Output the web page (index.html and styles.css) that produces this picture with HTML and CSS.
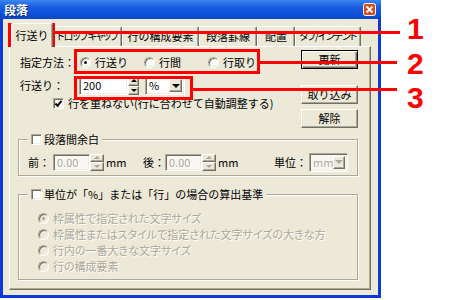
FILE: index.html
```html
<!DOCTYPE html>
<html lang="ja">
<head>
  <meta charset="UTF-8">
  <title>段落</title>
  <link rel="stylesheet" href="styles.css">
</head>
<body>

<div class="stage">
  <div class="window">
    <div class="titlebar">
      <span class="title">段落</span>
      <span class="close-btn">
        <svg width="13" height="13" viewBox="0 0 13 13">
          <rect x="0.5" y="0.5" width="12" height="12" rx="2" fill="#DA4A22" stroke="#fff"/>
          <path d="M3.5 3.5 L9.5 9.5 M9.5 3.5 L3.5 9.5" stroke="#fff" stroke-width="1.8"/>
        </svg>
      </span>
    </div>

    <div class="window-body">
      <!-- Onglets -->
      <div class="tabs">
        <span class="tab active tab-spacing">行送り</span>
        <span class="tab tab-narrow tab-dropcap">ドロップキャップ</span>
        <span class="tab tab-parts">行の構成要素</span>
        <span class="tab tab-rule">段落罫線</span>
        <span class="tab tab-align">配置</span>
        <span class="tab tab-narrow tab-indent">タブ/インデント</span>
      </div>

      <div class="panel">
        <div class="top">
          <div class="fields">
            <div class="row row-method">
              <span class="field-label">指定方法：</span>
              <span class="option"><span class="radio checked"></span>行送り</span>
              <span class="option"><span class="radio"></span>行間</span>
              <span class="option"><span class="radio"></span>行取り</span>
            </div>
            <div class="row row-spacing">
              <span class="field-label">行送り：</span>
              <span class="spin">
                <span class="spin-input">200</span>
                <span class="spin-btns"><span class="up"></span><span class="down"></span></span>
              </span>
              <span class="combo">
                <span class="combo-text">%</span>
                <span class="combo-btn"></span>
              </span>
            </div>
            <div class="row row-check">
              <span class="check checked"></span>行を重ねない(行に合わせて自動調整する)
            </div>
          </div>

          <div class="buttons">
            <span class="btn default">更新</span>
            <span class="btn btn-import">取り込み</span>
            <span class="btn btn-reset">解除</span>
          </div>
        </div>

        <!-- Espacement entre paragraphes -->
        <fieldset class="group group-margin">
          <legend><span class="check"></span>段落間余白</legend>
          <div class="row margin-row">
            <span class="field-label before-label">前：</span>
            <span class="spin spin-sm disabled">
              <span class="spin-input">0.00</span>
              <span class="spin-btns"><span class="up"></span><span class="down"></span></span>
            </span>
            <span class="unit">mm</span>
            <span class="field-label after-label">後：</span>
            <span class="spin spin-sm disabled">
              <span class="spin-input">0.00</span>
              <span class="spin-btns"><span class="up"></span><span class="down"></span></span>
            </span>
            <span class="unit">mm</span>
            <span class="field-label unit-label">単位：</span>
            <span class="combo combo-sm disabled">
              <span class="combo-text">mm</span>
              <span class="combo-btn"></span>
            </span>
          </div>
        </fieldset>

        <!-- Base de calcul -->
        <fieldset class="group group-basis">
          <legend><span class="check"></span>単位が「%」または「行」の場合の算出基準</legend>
          <div class="choices">
            <div class="choice"><span class="radio checked"></span>枠属性で指定された文字サイズ</div>
            <div class="choice"><span class="radio"></span>枠属性またはスタイルで指定された文字サイズの大きな方</div>
            <div class="choice"><span class="radio"></span>行内の一番大きな文字サイズ</div>
            <div class="choice"><span class="radio"></span>行の構成要素</div>
          </div>
        </fieldset>
      </div>
    </div>
  </div>

  <!-- Annotations rouges -->
  <div class="callouts">
    <span class="mark mark-tab"></span>
    <span class="mark mark-method"></span>
    <span class="mark mark-spacing"></span>
    <span class="lead lead-1"></span>
    <span class="lead lead-2"></span>
    <span class="lead lead-3"></span>
    <span class="num num-1">1</span>
    <span class="num num-2">2</span>
    <span class="num num-3">3</span>
  </div>
</div>

</body>
</html>
```

FILE: styles.css
```css
body {
  margin: 0;
  background-color: #fff;
  font-family: "Noto Sans CJK JP", "Noto Sans", sans-serif;
  font-size: 11px;
  color: #000;
}

.stage {
  position: relative;
  width: 450px;
  height: 300px;
  overflow: hidden;
}

.window {
  width: 381px;
  height: 298px;
  box-sizing: border-box;
  display: flex;
  flex-direction: column;
  background-color: #0C3AD8;
  padding: 0 3px 3px;
}

.titlebar {
  height: 19px;
  margin: 0 -3px;
  padding: 0 5px 0 4px;
  display: flex;
  align-items: center;
  justify-content: space-between;
  background: linear-gradient(#3B86F2, #1A5FE0 35%, #0B50D8 75%, #0A47C6);
}

.title {
  color: #fff;
  font-weight: bold;
  font-size: 12px;
  line-height: 19px;
  text-shadow: 1px 1px 0 #0A2A8A;
}

.close-btn {
  display: flex;
  width: 13px;
  height: 13px;
}

.window-body {
  flex: 1;
  display: flex;
  flex-direction: column;
  background-color: #ECE9D8;
  padding: 4px 7px 5px 6px;
  line-height: 13px;
}

/* Onglets */
.tabs {
  display: flex;
  align-items: flex-end;
  height: 23px;
  margin-left: 2px;
}

.tab {
  box-sizing: border-box;
  height: 20px;
  border: 1px solid #fff;
  border-right-color: #716F64;
  border-bottom: 0;
  border-radius: 2px 2px 0 0;
  box-shadow: inset -1px 0 0 #ACA899;
  text-align: center;
  line-height: 18px;
  white-space: nowrap;
  overflow: hidden;
}

.tab.active {
  height: 24px;
  margin-bottom: -1px;
  position: relative;
  z-index: 1;
  background-color: #ECE9D8;
  line-height: 22px;
}

.tab-narrow {
  font-size: 10px;
  letter-spacing: -1px;
  font-feature-settings: "palt";
}

.tab-spacing { width: 42px; }
.tab-dropcap { width: 69px; }
.tab-parts { width: 77px; }
.tab-rule { width: 58px; }
.tab-align { width: 38px; }
.tab-indent { width: 66px; }

.panel {
  flex: 1;
  box-sizing: border-box;
  border: 1px solid #fff;
  border-right-color: #716F64;
  border-bottom-color: #716F64;
  box-shadow: inset -1px -1px 0 #ACA899;
  padding: 3px 12px 0 8px;
}

/* Controles */
.radio,
.check,
.spin-input,
.combo {
  box-sizing: border-box;
  border: 1px solid;
  border-color: #ACA899 #fff #fff #ACA899;
  box-shadow: inset 1px 1px 0 #716F64, inset -1px -1px 0 #F1EFE2;
  background-color: #fff;
}

.btn,
.spin-btns span,
.combo-btn {
  box-sizing: border-box;
  border: 1px solid;
  border-color: #fff #716F64 #716F64 #fff;
  box-shadow: inset -1px -1px 0 #ACA899;
  background-color: #ECE9D8;
}

.radio {
  flex: none;
  width: 11px;
  height: 11px;
  border-radius: 50%;
  display: flex;
  align-items: center;
  justify-content: center;
}

.radio.checked::after {
  content: "";
  width: 3px;
  height: 3px;
  border-radius: 50%;
  background-color: #000;
}

.check {
  flex: none;
  width: 11px;
  height: 11px;
  display: flex;
  align-items: center;
  justify-content: center;
}

.check.checked::after {
  content: "";
  width: 5px;
  height: 2px;
  margin-top: -2px;
  border-left: 2px solid #000;
  border-bottom: 2px solid #000;
  transform: rotate(-50deg);
}

.top {
  display: flex;
  justify-content: space-between;
}

.fields {
  display: flex;
  flex-direction: column;
}

.row {
  display: flex;
  align-items: center;
}

.row-method {
  height: 24px;
}

.field-label {
  flex: none;
  margin-left: 2px;
}

.row-method .field-label {
  width: 60px;
}

.option {
  display: flex;
  align-items: center;
  gap: 4px;
  width: 64px;
}

.row-spacing {
  height: 23px;
}

.row-spacing .field-label {
  width: 59px;
}

.spin {
  display: flex;
  height: 19px;
}

.spin-input {
  width: 49px;
  padding-left: 3px;
  line-height: 17px;
}

.spin-btns {
  display: flex;
  flex-direction: column;
  width: 11px;
}

.spin-btns span {
  flex: 1;
  display: flex;
  align-items: center;
  justify-content: center;
}

.spin-btns .up::after {
  content: "";
  border-left: 3px solid transparent;
  border-right: 3px solid transparent;
  border-bottom: 3px solid #000;
}

.spin-btns .down::after {
  content: "";
  border-left: 3px solid transparent;
  border-right: 3px solid transparent;
  border-top: 3px solid #000;
}

.combo {
  margin-left: 6px;
  width: 40px;
  height: 19px;
  display: flex;
  padding: 2px;
}

.combo-text {
  flex: 1;
  padding-left: 1px;
  line-height: 13px;
}

.combo-btn {
  width: 13px;
  display: flex;
  align-items: center;
  justify-content: center;
}

.combo-btn::after {
  content: "";
  border-left: 4px solid transparent;
  border-right: 4px solid transparent;
  border-top: 4px solid #000;
}

.row-check {
  height: 13px;
  padding-left: 35px;
  gap: 4px;
}

.buttons {
  display: flex;
  flex-direction: column;
  width: 57px;
}

.btn {
  height: 19px;
  text-align: center;
  line-height: 17px;
}

.btn.default {
  border-color: #000;
  box-shadow: inset 1px 1px 0 #fff, inset -1px -1px 0 #716F64, inset -2px -2px 0 #ACA899;
}

.btn-import {
  margin-top: 16px;
}

.btn-reset {
  margin-top: 5px;
}

/* Cadres */
.group {
  margin: 5px 0 0;
  min-inline-size: 0;
  border: 1px solid #ACA899;
  box-shadow: 1px 1px 0 #fff, inset 1px 1px 0 #fff;
  padding: 8px 9px 4px;
}

.group legend {
  display: flex;
  align-items: center;
  gap: 2px;
  padding: 0 3px;
  line-height: 12px;
  background-color: #ECE9D8;
}

.margin-row {
  height: 18px;
}

.margin-row .field-label {
  margin-left: 0;
}

.before-label {
  width: 25px;
}

.after-label {
  width: 22px;
  margin-left: 18px !important;
}

.unit-label {
  width: 35px;
  margin-left: auto !important;
}

.unit {
  margin-left: 2px;
  width: 19px;
}

.spin-sm {
  height: 17px;
}

.spin-sm .spin-input {
  width: 37px;
  line-height: 15px;
}

.spin-sm .spin-btns {
  width: 14px;
}

.combo-sm {
  margin-left: 0;
  width: 39px;
}

.disabled .spin-input,
.disabled .combo-text,
.choice {
  color: #ACA899;
  text-shadow: 1px 1px 0 #fff;
}

.disabled .spin-input,
.combo-sm {
  background-color: #F7F6F1;
}

.disabled .spin-btns span::after {
  border-top-color: #ACA899;
  border-bottom-color: #ACA899;
}

.disabled .combo-btn::after {
  border-top-color: #ACA899;
}

.group-basis {
  margin-top: 12px;
  padding: 10px 9px 5px;
}

.choices {
  padding-left: 10px;
}

.choice {
  display: flex;
  align-items: center;
  gap: 4px;
  height: 16px;
  white-space: nowrap;
  font-feature-settings: "palt";
}

.choice .radio {
  background-color: #ECE9D8;
}

.choice .radio.checked::after {
  background-color: #ACA899;
}

/* Annotations */
.callouts {
  position: absolute;
  inset: 0;
  pointer-events: none;
}

.mark {
  position: absolute;
  box-sizing: border-box;
  border: 3px solid #F00;
}

.mark-tab {
  left: 8px;
  top: 23px;
  width: 47px;
  height: 24px;
}

.mark-method {
  left: 74px;
  top: 49px;
  width: 186px;
  height: 25px;
}

.mark-spacing {
  left: 74px;
  top: 76px;
  width: 119px;
  height: 24px;
}

.lead {
  position: absolute;
  height: 3px;
  background-color: #F00;
}

.lead-1 {
  left: 55px;
  top: 31px;
  width: 345px;
}

.lead-2 {
  left: 260px;
  top: 61px;
  width: 137px;
}

.lead-3 {
  left: 193px;
  top: 88px;
  width: 204px;
}

.num {
  position: absolute;
  left: 407px;
  font-family: "Liberation Sans", Arial, sans-serif;
  font-weight: bold;
  font-size: 30px;
  line-height: 30px;
  color: #F00;
}

.num-1 { top: 14px; }
.num-2 { top: 49px; }
.num-3 { top: 83px; }
```
